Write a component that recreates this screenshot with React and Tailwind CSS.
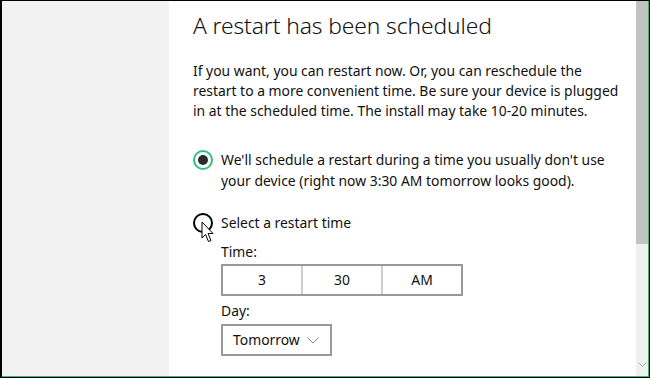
import React from "react";

function Cursor() {
  return (
    <svg
      className="absolute left-[199px] top-[220px]"
      width="14"
      height="22"
      viewBox="0 0 14 22"
    >
      <path
        d="M1 1 L1 17 L4.5 13.5 L7.5 20.5 L10 19.5 L7 12.5 L12 12.5 Z"
        fill="#fff"
        stroke="#000"
        strokeWidth="1"
        strokeLinejoin="miter"
      />
    </svg>
  );
}

export default function App() {
  return (
    <div
      className="relative w-[650px] h-[378px] overflow-hidden border-t border-l-2 border-r border-b border-black bg-white"
      style={{ fontFamily: '"Noto Sans", "Open Sans", sans-serif' }}
    >
      <div className="flex h-full border-r border-b border-[#3cb878]">
        {/* left nav */}
        <div className="w-[167px] shrink-0 bg-[#f2f2f2]" />

        {/* content */}
        <div className="flex-1 pl-6 pt-[10px] text-[#111] overflow-hidden">
          <h1 className="text-[22.8px] font-light leading-[30px] tracking-[-0.1px]">
            A restart has been scheduled
          </h1>
          <p className="mt-[20px] whitespace-nowrap text-[13.9px] leading-[20px]">
            If you want, you can restart now. Or, you can reschedule the
            <br />
            restart to a more convenient time. Be sure your device is plugged
            <br />
            in at the scheduled time. The install may take 10-20 minutes.
          </p>

          <div className="mt-[28px] flex items-start gap-[8px]">
            <div className="mt-[1px] flex h-[20px] w-[20px] shrink-0 items-center justify-center rounded-full border-2 border-[#2ec27e]">
              <div className="h-[10px] w-[10px] rounded-full bg-[#2b2b2b]" />
            </div>
            <div className="whitespace-nowrap text-[13.9px] leading-[21px]">
              We'll schedule a restart during a time you usually don't use
              <br />
              your device (right now 3:30 AM tomorrow looks good).
            </div>
          </div>

          <div className="mt-[22px] flex items-center gap-[8px]">
            <div className="h-[20px] w-[20px] shrink-0 rounded-full border-2 border-[#000]" />
            <div className="text-[13.9px] leading-[20px]">
              Select a restart time
            </div>
          </div>

          <div className="ml-[28px]">
            <div className="mt-[9px] text-[13.9px] leading-[20px]">Time:</div>
            <div className="mt-[2px] flex h-[32px] w-[242px] border-2 border-[#999] text-[13.9px]">
              <div className="flex flex-1 items-center justify-center border-r-2 border-[#ccc]">
                3
              </div>
              <div className="flex flex-1 items-center justify-center border-r-2 border-[#ccc]">
                30
              </div>
              <div className="flex flex-1 items-center justify-center">AM</div>
            </div>
            <div className="mt-[5px] text-[13.9px] leading-[20px]">Day:</div>
            <div className="mt-[3px] flex h-[32px] w-[111px] items-center border-2 border-[#999] pl-[10px] text-[13.9px]">
              <span>Tomorrow</span>
              <svg
                className="ml-[7px]"
                width="12"
                height="7"
                viewBox="0 0 12 7"
              >
                <path
                  d="M0.5 0.5 L6 6 L11.5 0.5"
                  fill="none"
                  stroke="#888"
                  strokeWidth="1"
                />
              </svg>
            </div>
          </div>
        </div>

        {/* scrollbar */}
        <div className="flex w-[12px] shrink-0 flex-col bg-[#f0f0f0]">
          <div className="h-[243px] bg-[#c2c2c2]" />
          <div className="flex-1" />
          <div className="flex h-[14px] items-start justify-center">
            <svg width="9" height="5" viewBox="0 0 9 5">
              <path
                d="M0.5 0.5 L4.5 4.5 L8.5 0.5"
                fill="none"
                stroke="#aaa"
                strokeWidth="1"
              />
            </svg>
          </div>
        </div>
      </div>
      <Cursor />
    </div>
  );
}
